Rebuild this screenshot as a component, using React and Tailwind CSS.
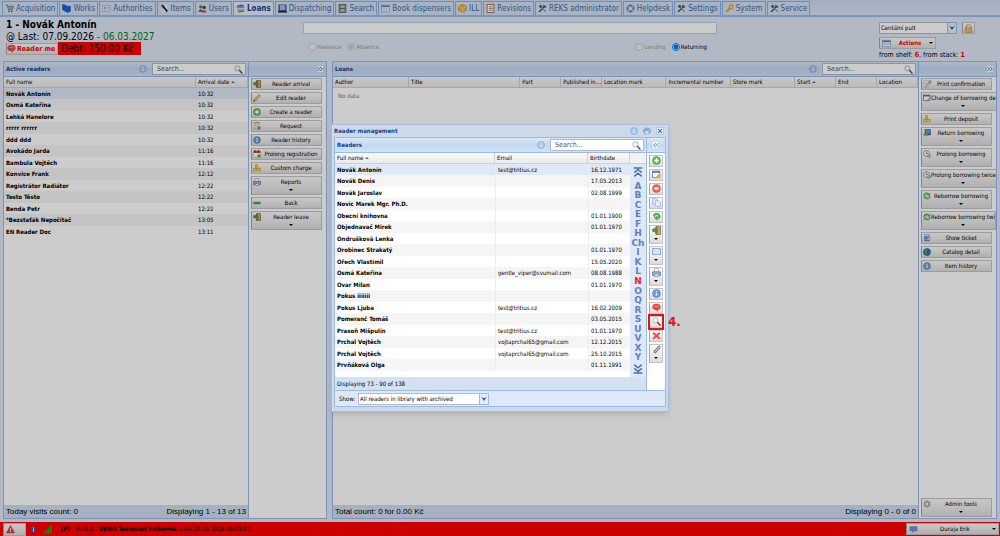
import React from "react";
import clsx from "clsx";

const DRAWINGS = {
  info: (
    <>
      <circle cx="8" cy="8" r="7" fill="#6f9fd8" stroke="#4a78b5" />
      <path d="M8 7v5M8 3.5v2" stroke="#fff" strokeWidth="2.4" />
    </>
  ),
  infoPale: (
    <>
      <circle cx="8" cy="8" r="7" fill="#a9c6ee" stroke="#7ba2d6" />
      <path d="M8 7v5M8 3.5v2" stroke="#e9f2ff" strokeWidth="2.4" />
    </>
  ),
  search: (
    <>
      <circle cx="6" cy="6" r="4.6" fill="#f4f8fc" stroke="#a3abb5" strokeWidth="1.5" />
      <path d="M9.5 9.5l5.5 5.5" stroke="#4d4d4d" strokeWidth="2.6" />
    </>
  ),
  cart: (
    <>
      <path d="M1 2h3l2 8h7l2-6H5" fill="#a7adb8" stroke="#6c7480" strokeWidth="1.5" />
      <circle cx="7" cy="13" r="1.5" fill="#555" />
      <circle cx="12" cy="13" r="1.5" fill="#555" />
    </>
  ),
  works: <path d="M1 1l6 1 1 2 7 0v9l-5 2-9-5z" fill="#1166e0" stroke="#0b4bb0" />,
  card: (
    <>
      <rect x="1" y="3" width="14" height="10" fill="#e8eef8" stroke="#8fa8d0" />
      <circle cx="5" cy="7" r="2" fill="#d08a4a" />
      <path d="M9 6h5M9 9h5M3 11h5" stroke="#6a8bc0" />
    </>
  ),
  pen: (
    <>
      <path d="M4 2h9v12H7z" fill="#f6f6f6" />
      <path d="M2 2l3-1 9 11-2 3z" fill="#222" />
      <path d="M2 2l3 6" stroke="#888" />
    </>
  ),
  users: (
    <>
      <circle cx="5" cy="5" r="3" fill="#a85a30" />
      <path d="M1 14c0-6 8-6 8 0z" fill="#3d6fc0" />
      <circle cx="11" cy="6" r="3" fill="#5a3820" />
      <path d="M7 15c0-6 8-6 8 0z" fill="#d0452f" />
    </>
  ),
  books: (
    <>
      <path d="M1 3l9-2 5 2-9 2z" fill="#3c64c8" />
      <path d="M1 3v3l5 2 9-2V3L6 5z" fill="#6d93e5" />
      <path d="M2 8l4 2 8-2v3l-8 2-4-2z" fill="#e0a626" />
      <path d="M4 12l3 1 8-2v2l-8 2-3-1z" fill="#389a4d" />
    </>
  ),
  monitor: (
    <>
      <rect x="1" y="1" width="14" height="12" fill="#26387a" />
      <rect x="3" y="2" width="10" height="9" fill="#9cc0f2" />
      <path d="M0 14h16" stroke="#111" strokeWidth="2.4" />
    </>
  ),
  cabinet: (
    <>
      <rect x="2" y="1" width="12" height="14" fill="#98a492" stroke="#59634f" strokeWidth="1.5" />
      <path d="M3 8h10" stroke="#59634f" strokeWidth="1.5" />
      <path d="M6 5h4M6 11h4" stroke="#f1f1e4" strokeWidth="2" />
    </>
  ),
  grid: (
    <>
      <rect x="1" y="2" width="14" height="12" fill="#f7fbff" stroke="#6f93c8" />
      <path d="M1 4h14" stroke="#5680c0" strokeWidth="3" />
      <path d="M5.5 5v9M10.5 5v9M1 9h14" stroke="#92afd9" />
    </>
  ),
  box: (
    <>
      <path d="M8 1l7 3v7l-7 4-7-4V4z" fill="#f2b233" stroke="#b57a12" />
      <path d="M1 4l7 4 7-4M8 8v7" stroke="#fff0be" fill="none" />
    </>
  ),
  list: (
    <>
      <rect x="2" y="1" width="12" height="14" fill="#fff" stroke="#b0542e" strokeWidth="1.5" />
      <path d="M5 5h7M5 8h7M5 11h7" stroke="#8a6550" strokeWidth="1.3" />
    </>
  ),
  tools: (
    <>
      <path d="M2 14L12 4" stroke="#333b48" strokeWidth="2.4" />
      <path d="M14 14L5 5" stroke="#8a94a5" strokeWidth="2.4" />
      <path d="M1 5l4-4 3 3-3 3zM10 1l5 4-2 2-4-3z" fill="#515b6b" />
    </>
  ),
  help: (
    <>
      <circle cx="8" cy="8" r="6.5" fill="#6b9ad2" stroke="#3e699f" />
      <circle cx="8" cy="8" r="2.8" fill="#e3effc" />
      <path d="M3 3l3 3M10 10l3 3M13 3l-3 3M3 13l3-3" stroke="#d9e7f7" strokeWidth="2" />
    </>
  ),
  key: (
    <>
      <path d="M2 14l7-7" stroke="#e4a42a" strokeWidth="3.5" />
      <path d="M4 12l2 2" stroke="#e4a42a" strokeWidth="2" />
      <circle cx="11" cy="5" r="3.2" fill="#fbe9b0" stroke="#e4a42a" strokeWidth="2.4" />
    </>
  ),
  bubble: (
    <>
      <ellipse cx="8" cy="7" rx="7.5" ry="5.5" fill="#f04848" />
      <path d="M6 11l4 5 1-5z" fill="#f04848" />
      <path d="M4 6h8" stroke="#ff9c9c" strokeWidth="1.5" />
    </>
  ),
  doorIn: (
    <>
      <path d="M7 1h8v14H7z" fill="#b57c42" stroke="#6b4620" />
      <path d="M10 2l4-1v14l-4-2z" fill="#d9a667" />
      <path d="M1 5h5V2l5 5.500L6 13v-3H1z" fill="#4d9a4a" stroke="#2f6b2d" strokeWidth=".7" />
    </>
  ),
  pencil: (
    <>
      <path d="M2 11L12 1l3 3L5 14l-4 1z" fill="#f4b04a" stroke="#b97518" />
      <path d="M1 15l1-3 2 2z" fill="#333" />
      <path d="M4 12l8-8" stroke="#fde0a8" />
    </>
  ),
  add: (
    <>
      <circle cx="8" cy="8" r="7" fill="#62bd5a" stroke="#3c8f38" />
      <path d="M8 4v8M4 8h8" stroke="#fff" strokeWidth="2.6" />
    </>
  ),
  hourglass: (
    <>
      <path d="M2 1h11v2L9 8l4 4v2H2v-2l4-4-4-5z" fill="#dce8f5" stroke="#8b8f98" />
      <path d="M1 1.500h13" stroke="#d79c35" strokeWidth="2" />
      <circle cx="12" cy="12" r="3.5" fill="#57ab52" />
    </>
  ),
  calendar: (
    <>
      <rect x="1" y="2" width="14" height="12" fill="#fff" stroke="#b9b9b9" />
      <path d="M1 2h14v4H1z" fill="#e23a30" />
      <path d="M4 0v3M11 0v3" stroke="#7d1f1a" strokeWidth="2" />
      <circle cx="12" cy="12" r="3.5" fill="#57ab52" />
    </>
  ),
  coins: (
    <>
      <path d="M5 1h4v8H5z" fill="#f4c84a" stroke="#c48d14" />
      <path d="M1 9h6v5H1zM8 8h7v6H8z" fill="#f6c536" stroke="#c48d14" />
      <path d="M1 12h14" stroke="#fff0ae" />
    </>
  ),
  printer: (
    <>
      <path d="M4 1h7l1 6H4z" fill="#fff" stroke="#7b8797" />
      <path d="M1 7h14v6H1z" fill="#a8bad4" stroke="#51678a" strokeWidth="1.3" />
      <path d="M4 11h8v4H4z" fill="#f6f8fb" stroke="#51678a" />
    </>
  ),
  minus: <rect x="1" y="6" width="14" height="4" rx="1" fill="#58ad58" stroke="#3f8a40" />,
  note: (
    <>
      <path d="M2 1h10v13H2z" fill="#f7fbff" stroke="#9fb2cc" />
      <path d="M4 5h5M4 8h4" stroke="#9fb2cc" />
      <path d="M14 3l-6 7-3 5" stroke="#e2a23b" strokeWidth="2.5" fill="none" />
      <path d="M13 1h3v8z" fill="#4f82d0" />
    </>
  ),
  formEdit: (
    <>
      <rect x="1" y="2" width="13" height="11" fill="#fff" stroke="#4b7ac0" strokeWidth="1.5" />
      <path d="M1 3.500h13" stroke="#4b7ac0" strokeWidth="3" />
      <path d="M14 7l-6 6-2 2" stroke="#eda535" strokeWidth="3" />
    </>
  ),
  bookReturn: (
    <>
      <path d="M4 1h11v11H4z" fill="#4d7cbe" stroke="#29518e" />
      <path d="M6 4h7M6 6h7" stroke="#cfdff5" />
      <path d="M1 9h5V6l4 5-4 5v-3H1z" fill="#60ac53" />
    </>
  ),
  clock: (
    <>
      <circle cx="7" cy="7" r="6" fill="#f2f4f7" stroke="#8b8f96" strokeWidth="1.5" />
      <path d="M7 3v4h3" stroke="#444" fill="none" />
      <circle cx="12" cy="12" r="3.5" fill="#57ab52" />
      <path d="M12 10v4M10 12h4" stroke="#fff" />
    </>
  ),
  cycle: (
    <>
      <path d="M1 7c1-6 8-7 11-3l2-2v5H9l1-2C8 4 5 4 4 7z" fill="#63b160" stroke="#3b8440" strokeWidth=".6" />
      <path d="M15 9c-1 6-8 7-11 3l-2 2V9h5l-1 2c2 1 5 1 6-2z" fill="#7fc47a" stroke="#3b8440" strokeWidth=".6" />
    </>
  ),
  ticket: (
    <>
      <path d="M3 1h10v13H3z" fill="#d5e6fb" stroke="#6e9bd6" />
      <circle cx="6" cy="8" r="4" fill="#5f95dc" />
      <path d="M9 5h3M10 8h2M3 13h10" stroke="#2f63ad" strokeWidth="1.3" />
    </>
  ),
  globe: (
    <>
      <circle cx="8" cy="8" r="7" fill="#1f62c4" stroke="#16458c" />
      <path d="M4 3l4-1 2 3-3 3 2 3-2 3-4-4zM12 6l3 2-2 4-2-2z" fill="#4fb34a" />
    </>
  ),
  remove: (
    <>
      <circle cx="8" cy="8" r="7" fill="#f26458" stroke="#cc3a30" />
      <rect x="4.500" y="6" width="7" height="4" fill="#fff" />
    </>
  ),
  copy: (
    <>
      <path d="M1 1h7l2 2v8H1z" fill="#d9e9fd" stroke="#76a0da" />
      <path d="M6 5h6l3 3v7H6z" fill="#eaf3ff" stroke="#76a0da" />
    </>
  ),
  refresh: (
    <path d="M2 7c1-7 12-7 13 1-1 5-6 5-7 4l1 3-5-5 5-3v2c4 0 3-4-1-4-3 0-3 2-3 3z" fill="#5cb256" stroke="#36833a" strokeWidth=".7" />
  ),
  mail: (
    <>
      <rect x="1" y="3" width="14" height="10" fill="#eef5ff" stroke="#6b9be0" strokeWidth="1.5" />
      <path d="M1 3l7 6 7-6M1 13l5-5M15 13l-5-5" stroke="#8fb3e8" fill="none" />
    </>
  ),
  cross: <path d="M2 3l12 11M14 3L2 14" stroke="#f04a48" strokeWidth="3.6" />,
  clip: (
    <path d="M3 13l8-10c2-2 4 0 3 2l-7 8c-2 2-4 0-3-2l6-6" fill="none" stroke="#7d7d7d" strokeWidth="2" />
  ),
  gear: (
    <>
      <circle cx="8" cy="8" r="4.5" fill="none" stroke="#a5a5a5" strokeWidth="3" />
      <path d="M8 0v3M8 13v3M0 8h3M13 8h3M2 2l2 2M12 12l2 2M14 2l-2 2M2 14l2-2" stroke="#a5a5a5" strokeWidth="2" />
    </>
  ),
  lock: (
    <>
      <path d="M4 8V5c0-5 8-5 8 0v3" fill="none" stroke="#a9a9a9" strokeWidth="2" />
      <rect x="2" y="7" width="12" height="8" fill="#eebb55" stroke="#b98a2c" />
    </>
  ),
  warning: (
    <>
      <path d="M8 1l7 13H1z" fill="#e0413e" stroke="#c11d1d" />
      <path d="M8 5v5M8 11v2" stroke="#fff" strokeWidth="1.6" />
    </>
  ),
  ball: (
    <>
      <circle cx="8" cy="8" r="6.5" fill="#2d55d0" />
      <path d="M8 3v3M8 7v6" stroke="#f1f5ff" strokeWidth="2.2" />
    </>
  ),
  signal: (
    <path d="M1 15v-2h2v2zM4.500 15v-5h2.500v5zM8.500 15V6H11v9zM12.500 15V1H15v14z" fill="#2f9e1d" stroke="#2f9e1d" />
  ),
  speech: <path d="M1 2h14v9H9l-3 4v-4H1z" fill="#7390d2" />,
  toTop: (
    <path d="M1 1.500h14M2 9l6-5 6 5M2 15l6-5 6 5" fill="none" stroke="#4a71b0" strokeWidth="2.4" />
  ),
  toBottom: (
    <path d="M1 14.500h14M2 1l6 5 6-5M2 7l6 5 6-5" fill="none" stroke="#4a71b0" strokeWidth="2.4" />
  ),
  close: (
    <>
      <rect x=".7" y=".7" width="14.6" height="14.6" rx="2" fill="#f7fbff" stroke="#86a9dc" strokeWidth="1.4" />
      <path d="M4 4l8 8M12 4l-8 8" stroke="#4470b8" strokeWidth="2.2" />
    </>
  ),
  expand: (
    <>
      <rect x=".7" y=".7" width="14.6" height="14.6" rx="2" fill="#fff" stroke="#9dbce8" />
      <path d="M3 4l4 4-4 4M8.500 4l4 4-4 4" fill="none" stroke="#3f6cb5" strokeWidth="1.8" />
    </>
  ),
  collapse: (
    <>
      <rect x=".7" y=".7" width="14.6" height="14.6" rx="2" fill="#fff" stroke="#9dbce8" />
      <path d="M7.500 4l-4 4 4 4M13 4L9 8l4 4" fill="none" stroke="#3f6cb5" strokeWidth="1.8" />
    </>
  ),
  print: (
    <>
      <path d="M4 2h8v3h3v6h-3v3H4v-3H1V5h3z" fill="#8fb0de" stroke="#6b93cb" />
      <path d="M5 9h6v4H5z" fill="#eaf2fd" />
    </>
  ),
};

const Icon = ({ name, className = "size-[9px]" }) => (
  <svg viewBox="0 0 16 16" className={clsx("shrink-0", className)} aria-hidden="true">
    {DRAWINGS[name]}
  </svg>
);

const Caret = () => (
  <svg viewBox="0 0 6 3" className="h-[2px] w-[4px] shrink-0" aria-hidden="true">
    <path d="M0 0h6L3 3z" fill="#000" />
  </svg>
);

const SortMark = () => (
  <svg viewBox="0 0 6 3" className="ml-[2px] inline-block h-[2px] w-[4px] align-middle" aria-hidden="true">
    <path d="M0 3h6L3 0z" fill="#3b74c4" />
  </svg>
);

const tabs = [
  ["Acquisition", "cart"],
  ["Works", "works"],
  ["Authorities", "card"],
  ["Items", "pen"],
  ["Users", "users"],
  ["Loans", "books"],
  ["Dispatching", "monitor"],
  ["Search", "cabinet"],
  ["Book dispensers", "grid"],
  ["ILL", "box"],
  ["Revisions", "list"],
  ["REKS administrator", "tools"],
  ["Helpdesk", "help"],
  ["Settings", "tools"],
  ["System", "key"],
  ["Service", "tools"],
];

const activeReaders = [
  ["Novák Antonín", "10:32"],
  ["Osmá Kateřina", "10:32"],
  ["Lehká Hanelore", "10:32"],
  ["rrrrr rrrrrr", "10:32"],
  ["ddd ddd", "10:32"],
  ["Avokádo Jarda", "11:16"],
  ["Bambula Vojtěch", "11:16"],
  ["Konvice Frank", "12:12"],
  ["Registrátor Radiátor", "12:22"],
  ["Testo Těsto", "12:22"],
  ["Benda Petr", "12:22"],
  ["*Bezstaťák Nepočítač", "13:05"],
  ["EN Reader Doc", "13:11"],
];

const readers = [
  ["Novák Antonín", "test@tritius.cz", "16.12.1971"],
  ["Novák Denis", "", "17.05.2013"],
  ["Novák Jaroslav", "", "02.08.1999"],
  ["Novic Marek Mgr. Ph.D.", "", ""],
  ["Obecní knihovna", "", "01.01.1900"],
  ["Objednavač Mirek", "", "01.01.1970"],
  ["Ondrušková Lenka", "", ""],
  ["Orobinec Strakatý", "", "01.01.1970"],
  ["Ořech Vlastimil", "", "15.05.2020"],
  ["Osmá Kateřina", "gentle_viper@svumail.com", "08.08.1988"],
  ["Ovar Milan", "", "01.01.1970"],
  ["Pokus iiiiiii", "", ""],
  ["Pokus Ljuba", "test@tritius.cz", "16.02.2009"],
  ["Pomeranč Tomáš", "", "03.05.2015"],
  ["Prasoň Mišpulín", "test@tritius.cz", "01.01.1970"],
  ["Prchal Vojtěch", "vojtaprchal65@gmail.com", "12.12.2015"],
  ["Prchal Vojtěch", "vojtaprchal65@gmail.com", "25.10.2015"],
  ["Prvňáková Olga", "", "01.11.1991"],
];

const readerActions = [
  ["Reader arrival", "doorIn"],
  ["Edit reader", "pencil"],
  ["Create a reader", "add"],
  ["Request", "hourglass"],
  ["Reader history", "info"],
  ["Prolong registration", "calendar"],
  ["Custom charge", "coins"],
  ["Reports", "printer", true],
  ["Back", "minus"],
  ["Reader leave", "doorIn", true],
];

const loanActions = [
  ["Print confirmation", "note"],
  ["Change of borrowing de", "formEdit", true],
  ["Print deposit", "coins"],
  ["Return borrowing", "bookReturn", true],
  ["Prolong borrowing", "clock", true],
  ["Prolong borrowing twice", "clock", true],
  ["Reborrow borrowing", "cycle", true],
  ["Reborrow borrowing twi", "cycle", true],
  ["Show ticket", "ticket"],
  ["Catalog detail", "globe"],
  ["Item history", "info"],
];

const dialogActions = [
  ["Add", "add"],
  ["Edit", "formEdit"],
  ["Remove", "remove"],
  ["Copy", "copy"],
  ["Refresh", "refresh"],
  ["Arrival", "doorIn", true],
  ["Mail", "mail", true],
  ["Print", "printer", true],
  ["Info", "info"],
  ["Message", "bubble"],
  ["Search", "search"],
  ["Delete", "cross"],
  ["Attachments", "clip", true],
];

const loanColumns = [
  ["Author", "w-[13%]"],
  ["Title", "w-[19%]"],
  ["Part", "w-[7%]"],
  ["Published in...", "w-[7%]"],
  ["Location mark", "w-[11%]"],
  ["Incremental number", "w-[11%]"],
  ["Store mark", "w-[11%]"],
  ["Start", "w-[7%]"],
  ["End", "w-[7%]"],
  ["Location", "w-[7%]"],
];

const letters = ["A", "B", "C", "E", "F", "H", "Ch", "I", "K", "L", "N", "O", "Q", "R", "S", "U", "V", "X", "Y"];

const BUTTON = "border border-[#c4c4c4] border-l-[#a8a8a8] bg-linear-to-b from-[#fafafa] via-[#ededed] to-[#dcdcdc]";
const BAR = "bg-linear-to-b from-[#dae7f6] via-[#c4d8f2] to-[#d3e2f6]";
const HEAD_ROW = "h-[11px] bg-linear-to-b from-[#fbfbfb] to-[#e9e9e9] text-left leading-[10px]";
const HEAD_CELL = "border-r border-b border-[#d0d0d0] pl-[2px] font-normal whitespace-nowrap";

const SearchBox = ({ label }) => (
  <label className="flex h-[12px] w-[94px] items-center border border-[#b5b8c8] bg-white pr-[2px] pl-[4px]">
    <input
      type="text"
      aria-label={label}
      placeholder="Search..."
      className="min-w-0 flex-1 text-[7px] leading-[10px] outline-none placeholder:text-[#555]"
    />
    <Icon name="search" className="size-[9px]" />
  </label>
);

const PanelHeader = ({ title, searchLabel }) => (
  <div className={clsx("flex h-[15px] items-center border-b border-[#99bbe8] px-[2px]", BAR)}>
    <h2 className="flex-1 font-bold text-[#15428b]">{title}</h2>
    <Icon name="infoPale" className="mr-[5px] size-[8px]" />
    <SearchBox label={searchLabel} />
  </div>
);

const ActionButton = ({ label, icon, menu }) => (
  <button
    type="button"
    className={clsx(
      "flex w-max min-w-full shrink-0 items-start pl-px leading-[10px] whitespace-nowrap",
      BUTTON,
      menu ? "h-[19px]" : "h-[12px]"
    )}
  >
    <Icon name={icon} className="mt-px size-[8px]" />
    <span className="flex flex-1 flex-col items-center gap-[2px]">
      {label}
      {menu && <Caret />}
    </span>
  </button>
);

const ActionPanel = ({ actions, children }) => (
  <aside className="flex w-[78px] shrink-0 flex-col overflow-hidden border border-l-0 border-[#99bbe8] bg-white">
    <div className={clsx("flex h-[15px] shrink-0 items-center justify-end border-b border-[#99bbe8] pr-[2px]", BAR)}>
      <button type="button" aria-label="Collapse panel">
        <Icon name="expand" className="block size-[8px]" />
      </button>
    </div>
    <div className="flex flex-1 flex-col gap-[2px] overflow-hidden py-px pr-[4px] pl-[2px]">
      {actions.map(([label, icon, menu]) => (
        <ActionButton key={label} label={label} icon={icon} menu={menu} />
      ))}
      {children}
    </div>
  </aside>
);

const StatusLine = ({ left, right }) => (
  <div className="flex h-[13px] shrink-0 items-center justify-between bg-[#d0def0] px-[2px] font-['Liberation_Sans',sans-serif] text-[8px]">
    <span>{left}</span>
    <span>{right}</span>
  </div>
);

const rowClass = (index) =>
  clsx(
    "odd:h-[11px] even:h-[12px] leading-[10px]",
    index === 0 ? "bg-[#dfe8f6]" : index % 2 ? "bg-[#f5f5f5]" : "bg-white"
  );

const Radio = ({ name, label, ...rest }) => (
  <label className={clsx("flex items-center gap-px", rest.disabled && "text-[#999]")}>
    <input type="radio" name={name} className="size-[8px]" {...rest} />
    {label}
  </label>
);

const SelectBox = ({ label, value, className, id }) => (
  <div className={clsx("relative h-[12px]", className)}>
    <select
      id={id}
      aria-label={id ? undefined : label}
      className="block h-full w-full appearance-none border border-[#b5b8c8] bg-white pr-[10px] pl-px leading-[10px]"
    >
      <option>{value}</option>
    </select>
    <span className="pointer-events-none absolute top-0 right-0 flex h-full w-[10px] items-center justify-center border border-[#9dbbe6] bg-[#e4eefb]">
      <svg viewBox="0 0 8 6" className="h-[4px] w-[6px]" aria-hidden="true">
        <path d="M0 0l4 6 4-6-4 2z" fill="#2f5b9f" />
      </svg>
    </span>
  </div>
);

const TopBar = () => (
  <nav className="flex h-[17px] shrink-0 items-end gap-px border-b-2 border-[#99bbe8] bg-linear-to-b from-[#cbdbf0] to-[#d8e5f5] pl-[2px]">
    {tabs.map(([label, icon]) => (
      <a
        key={label}
        href="#"
        className={clsx(
          "flex h-[14px] items-center gap-[2px] border border-b-0 border-[#8db2e3] px-[2px] text-[8px] whitespace-nowrap",
          label === "Loans" ? "bg-[#e3edfa] font-bold text-[#15428b]" : "bg-[#d3e1f4] text-[#416aa3]"
        )}
      >
        <Icon name={icon} className="size-[9px]" />
        {label}
      </a>
    ))}
  </nav>
);

const ReaderHeader = () => (
  <header className="flex h-[44px] shrink-0">
    <div className="w-[303px] pt-[2px] pl-[6px]">
      <h1 className="text-[10px] leading-[12px] font-bold">1 - Novák Antonín</h1>
      <p className="text-[10px] leading-[11px]">
        @ Last: 07.09.2026 <span className="text-[#008000]">- 06.03.2027</span>
      </p>
      <div className="flex h-[13px] items-center">
        <button
          type="button"
          className={clsx("flex h-[12px] w-[52px] items-center gap-px text-[7px] font-bold whitespace-nowrap text-[#ff0000]", BUTTON)}
        >
          <Icon name="bubble" />
          Reader me
        </button>
        <strong className="h-[13px] w-[83px] bg-[#ff0000] pl-[3px] text-[10px] leading-[13px] font-normal">
          Debt: 150.00 Kč
        </strong>
      </div>
    </div>

    <div className="mr-[162px] flex-1 pt-[5px]">
      <input type="text" aria-label="Barcode" className="block h-[12px] w-full border border-[#c3cbdc] bg-white px-[3px]" />
      <div className="flex justify-between px-[5px] pt-[8px] pr-[10px]">
        <div className="flex gap-[6px]">
          <Radio name="place" label="Presence" disabled />
          <Radio name="place" label="Absence" disabled defaultChecked />
        </div>
        <div className="flex gap-[6px]">
          <Radio name="mode" label="Lending" disabled />
          <Radio name="mode" label="Returning" defaultChecked />
        </div>
      </div>
    </div>

    <div className="w-[121px] pt-[5px]">
      <div className="flex items-center gap-[5px]">
        <SelectBox label="Desk" value="Centální pult" className="w-[78px]" />
        <button type="button" aria-label="Lock" className={clsx("flex h-[12px] w-[13px] items-center justify-center", BUTTON)}>
          <Icon name="lock" />
        </button>
      </div>
      <button type="button" className={clsx("mt-[3px] flex h-[12px] w-[57px] items-center px-[2px]", BUTTON)}>
        <Icon name="grid" />
        <span className="flex-1 font-bold text-[#ff0000]">Actions</span>
        <Caret />
      </button>
      <p className="mt-[2px] text-[7px] leading-[9px]">
        from shelf: <b className="text-[#ff0000]">6</b>, from stack: <b className="text-[#ff0000]">1</b>
      </p>
    </div>
  </header>
);

const ActiveReaders = () => (
  <section className="flex min-w-0 flex-1 flex-col border border-[#99bbe8] bg-white">
    <PanelHeader title="Active readers" searchLabel="Search active readers" />
    <div className="flex-1">
      <table className="w-full table-fixed border-separate border-spacing-0">
        <thead>
          <tr className={HEAD_ROW}>
            <th className={HEAD_CELL}>Full name</th>
            <th className={clsx("w-[52px]", HEAD_CELL)}>
              Arrival date
              <SortMark />
            </th>
          </tr>
        </thead>
        <tbody>
          {activeReaders.map(([name, time], i) => (
            <tr key={name} className={rowClass(i)}>
              <td className="px-[2px] font-bold">{name}</td>
              <td className="px-[2px]">{time}</td>
            </tr>
          ))}
        </tbody>
      </table>
    </div>
    <StatusLine left="Today visits count: 0" right="Displaying 1 - 13 of 13" />
  </section>
);

const Loans = () => (
  <section className="flex min-w-0 flex-1 flex-col border border-[#99bbe8] bg-white">
    <PanelHeader title="Loans" searchLabel="Search loans" />
    <div className="flex-1">
      <table className="w-full table-fixed border-separate border-spacing-0">
        <thead>
          <tr className={HEAD_ROW}>
            {loanColumns.map(([label, width]) => (
              <th key={label} className={clsx(width, HEAD_CELL)}>
                {label}
                {label === "Start" && <SortMark />}
              </th>
            ))}
          </tr>
        </thead>
        <tbody>
          <tr>
            <td colSpan={10} className="px-[5px] py-[3px] text-[#777]">
              No data
            </td>
          </tr>
        </tbody>
      </table>
    </div>
    <StatusLine left="Total count: 0 for 0.00 Kč" right="Displaying 0 - 0 of 0" />
  </section>
);

const ReaderDialog = () => (
  <div
    role="dialog"
    aria-label="Reader management"
    className="w-[338px] border border-[#a9bfdd] bg-[#ccd9e9] px-[2px] pb-[4px] shadow-md"
  >
    <div className="flex h-[12px] items-center gap-[5px] pr-[2px]">
      <h2 className="flex-1 font-bold text-[#15428b]">Reader management</h2>
      <Icon name="infoPale" className="size-[8px]" />
      <Icon name="print" className="size-[8px]" />
      <button type="button" aria-label="Close">
        <Icon name="close" className="block size-[8px]" />
      </button>
    </div>

    <div className="border border-[#99bbe8] bg-[#dfe8f6]">
      <div className="flex">
        <section className="flex min-w-0 flex-1 flex-col border-r border-[#99bbe8] bg-white">
          <PanelHeader title="Readers" searchLabel="Search readers" />
          <div className="flex flex-1">
            <div className="flex-1 pb-[6px]">
              <table className="w-full table-fixed border-separate border-spacing-0">
                <thead>
                  <tr className={HEAD_ROW}>
                    <th className={HEAD_CELL}>
                      Full name
                      <SortMark />
                    </th>
                    <th className={clsx("w-[93px]", HEAD_CELL)}>Email</th>
                    <th className={clsx("w-[42px]", HEAD_CELL)}>Birthdate</th>
                  </tr>
                </thead>
                <tbody>
                  {readers.map(([name, email, birth], i) => (
                    <tr key={i} className={rowClass(i)}>
                      <td className="px-[2px] font-bold">{name}</td>
                      <td className="border-l border-[#ededed] px-[2px] whitespace-nowrap">{email}</td>
                      <td className="border-l border-[#ededed] px-[2px]">{birth}</td>
                    </tr>
                  ))}
                </tbody>
              </table>
            </div>
            <div className="flex w-[16px] flex-col bg-[#dfe8f6]">
              <div className="h-[11px] border-b border-[#d0d0d0] bg-[#f2f2f2]" />
              <div className="flex flex-1 flex-col items-center justify-between py-[2px] font-['DejaVu_Sans',sans-serif] text-[9px] leading-[9px] font-bold text-[#5f80bd]">
                <button type="button" aria-label="First page">
                  <Icon name="toTop" className="mb-[3px] block h-[12px] w-[10px]" />
                </button>
                {letters.map((letter) => (
                  <a key={letter} href="#" className={letter === "N" ? "text-[#ff2020]" : undefined}>
                    {letter}
                  </a>
                ))}
                <button type="button" aria-label="Last page">
                  <Icon name="toBottom" className="block h-[12px] w-[10px]" />
                </button>
              </div>
            </div>
          </div>
          <div className="flex h-[13px] items-center bg-[#d3e1f1] px-[2px]">Displaying 73 - 90 of 138</div>
        </section>

        <aside className="flex w-[18px] flex-col bg-white">
          <div className={clsx("flex h-[15px] items-center justify-center border-b border-[#99bbe8]", BAR)}>
            <button type="button" aria-label="Expand panel">
              <Icon name="collapse" className="block size-[8px]" />
            </button>
          </div>
          <div className="flex flex-col items-center gap-[2px] pt-[2px]">
            {dialogActions.map(([label, icon, menu]) => (
              <div key={label} className="relative">
                <button
                  type="button"
                  aria-label={label}
                  className={clsx("flex w-[14px] flex-col items-center gap-[3px]", BUTTON, menu ? "h-[19px]" : "h-[12px]")}
                >
                  <Icon name={icon} />
                  {menu && <Caret />}
                </button>
                {label === "Search" && (
                  <>
                    <span className="absolute -inset-x-px -inset-y-[2px] border-2 border-[#e3131b]" />
                    <span className="absolute top-0 left-full pl-[5px] font-['DejaVu_Sans',sans-serif] text-[12px] leading-[12px] font-bold text-[#e3131b]">
                      4.
                    </span>
                  </>
                )}
              </div>
            ))}
          </div>
        </aside>
      </div>

      <div className="flex h-[16px] items-center gap-[3px] border-t border-[#99bbe8] pl-[4px]">
        <label htmlFor="show">Show:</label>
        <SelectBox id="show" value="All readers in library with archived" className="w-[131px]" />
      </div>
    </div>
  </div>
);

const Footer = () => (
  <footer className="flex h-[14px] shrink-0 items-center bg-[#ff0000] pr-[1px] pl-[3px]">
    <button type="button" aria-label="Warnings" className={clsx("flex h-[13px] w-[23px] items-center pl-[2px]", BUTTON)}>
      <Icon name="warning" />
    </button>
    <Icon name="ball" className="ml-[4px] size-[7px]" />
    <Icon name="signal" className="ml-[6px] size-[9px]" />
    <p className="ml-[9px] flex-1">
      <b>[P]</b>
      <span className="ml-[6px]">6.45.0 - </span>
      <b>DEMO Testovací knihovna</b> (Last 29.10.2026 09:03:27)
    </p>
    <button type="button" className={clsx("flex h-[12px] w-[93px] items-center px-[2px]", BUTTON)}>
      <Icon name="speech" />
      <span className="flex-1">Duraja Erik</span>
      <Caret />
    </button>
  </footer>
);

export default function App() {
  return (
    <div className="relative flex h-screen flex-col overflow-hidden bg-[#dfe8f6] font-['DejaVu_Sans_Condensed','DejaVu_Sans',sans-serif] text-[6px] leading-[10px] text-black">
      <TopBar />
      <ReaderHeader />
      <main className="flex min-h-0 flex-1 gap-[5px] px-[3px] pb-[3px]">
        <div className="flex w-[324px] shrink-0">
          <ActiveReaders />
          <ActionPanel actions={readerActions} />
        </div>
        <div className="flex min-w-0 flex-1">
          <Loans />
          <ActionPanel actions={loanActions}>
            <div className="mt-auto">
              <ActionButton label="Admin tools" icon="gear" menu />
            </div>
          </ActionPanel>
        </div>
      </main>
      <Footer />

      {/* Modal mask */}
      <div className="absolute inset-0 flex items-center justify-center bg-black/20">
        <ReaderDialog />
      </div>
    </div>
  );
}
